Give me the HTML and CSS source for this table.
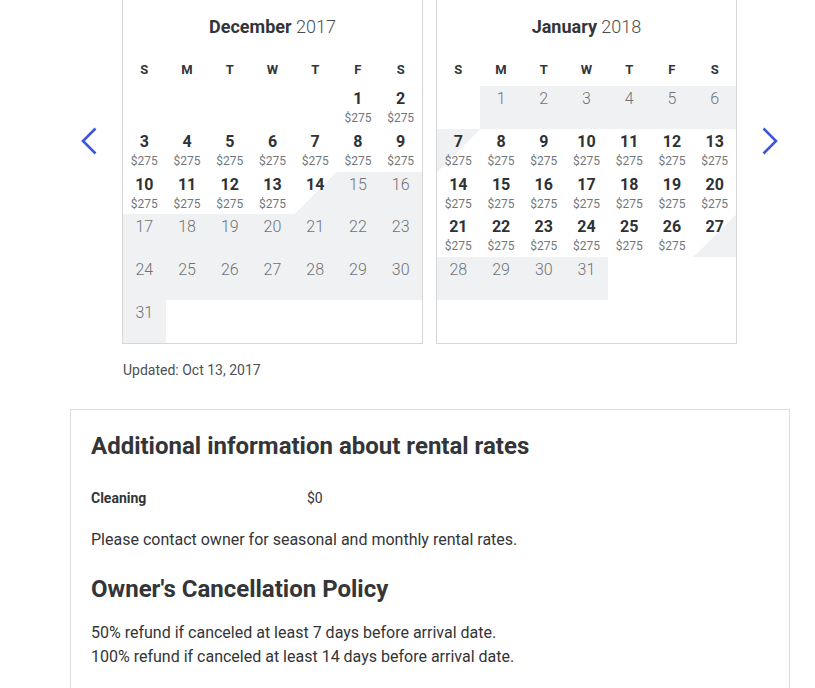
FILE: index.html
```html
<!DOCTYPE html>
<html lang="en">
<head>
    <meta charset="UTF-8">
    <meta name="viewport" content="width=device-width, initial-scale=1.0">
    <title>Rates</title>
    <link rel="stylesheet" href="styles.css">
</head>
<body>
<div class="page">
    <!-- Availability calendars -->
    <div class="cal-row">
        <button class="cal-arrow" aria-label="Previous month">
            <svg width="16" height="28" viewBox="0 0 16 28"><path d="M14.5 1.5 L2 14 L14.5 26.5" fill="none" stroke="#3f57d6" stroke-width="2.6"/></svg>
        </button>

        <div class="cal-pair">
            <div class="month">
                <div class="month-title"><b>December</b> 2017</div>
                <div class="weekdays"><span>S</span><span>M</span><span>T</span><span>W</span><span>T</span><span>F</span><span>S</span></div>
                <div class="days">
                    <div class="day blank"></div><div class="day blank"></div><div class="day blank"></div><div class="day blank"></div><div class="day blank"></div>
                    <div class="day"><b>1</b><i>$275</i></div>
                    <div class="day"><b>2</b><i>$275</i></div>
                    <div class="day"><b>3</b><i>$275</i></div>
                    <div class="day"><b>4</b><i>$275</i></div>
                    <div class="day"><b>5</b><i>$275</i></div>
                    <div class="day"><b>6</b><i>$275</i></div>
                    <div class="day"><b>7</b><i>$275</i></div>
                    <div class="day"><b>8</b><i>$275</i></div>
                    <div class="day"><b>9</b><i>$275</i></div>
                    <div class="day"><b>10</b><i>$275</i></div>
                    <div class="day"><b>11</b><i>$275</i></div>
                    <div class="day"><b>12</b><i>$275</i></div>
                    <div class="day"><b>13</b><i>$275</i></div>
                    <div class="day out"><b>14</b></div>
                    <div class="day off"><b>15</b></div>
                    <div class="day off"><b>16</b></div>
                    <div class="day off"><b>17</b></div>
                    <div class="day off"><b>18</b></div>
                    <div class="day off"><b>19</b></div>
                    <div class="day off"><b>20</b></div>
                    <div class="day off"><b>21</b></div>
                    <div class="day off"><b>22</b></div>
                    <div class="day off"><b>23</b></div>
                    <div class="day off"><b>24</b></div>
                    <div class="day off"><b>25</b></div>
                    <div class="day off"><b>26</b></div>
                    <div class="day off"><b>27</b></div>
                    <div class="day off"><b>28</b></div>
                    <div class="day off"><b>29</b></div>
                    <div class="day off"><b>30</b></div>
                    <div class="day off"><b>31</b></div>
                    <div class="day blank"></div><div class="day blank"></div><div class="day blank"></div><div class="day blank"></div><div class="day blank"></div><div class="day blank"></div>
                </div>
            </div>

            <div class="month">
                <div class="month-title"><b>January</b> 2018</div>
                <div class="weekdays"><span>S</span><span>M</span><span>T</span><span>W</span><span>T</span><span>F</span><span>S</span></div>
                <div class="days">
                    <div class="day blank"></div>
                    <div class="day off"><b>1</b></div>
                    <div class="day off"><b>2</b></div>
                    <div class="day off"><b>3</b></div>
                    <div class="day off"><b>4</b></div>
                    <div class="day off"><b>5</b></div>
                    <div class="day off"><b>6</b></div>
                    <div class="day in"><b>7</b><i>$275</i></div>
                    <div class="day"><b>8</b><i>$275</i></div>
                    <div class="day"><b>9</b><i>$275</i></div>
                    <div class="day"><b>10</b><i>$275</i></div>
                    <div class="day"><b>11</b><i>$275</i></div>
                    <div class="day"><b>12</b><i>$275</i></div>
                    <div class="day"><b>13</b><i>$275</i></div>
                    <div class="day"><b>14</b><i>$275</i></div>
                    <div class="day"><b>15</b><i>$275</i></div>
                    <div class="day"><b>16</b><i>$275</i></div>
                    <div class="day"><b>17</b><i>$275</i></div>
                    <div class="day"><b>18</b><i>$275</i></div>
                    <div class="day"><b>19</b><i>$275</i></div>
                    <div class="day"><b>20</b><i>$275</i></div>
                    <div class="day"><b>21</b><i>$275</i></div>
                    <div class="day"><b>22</b><i>$275</i></div>
                    <div class="day"><b>23</b><i>$275</i></div>
                    <div class="day"><b>24</b><i>$275</i></div>
                    <div class="day"><b>25</b><i>$275</i></div>
                    <div class="day"><b>26</b><i>$275</i></div>
                    <div class="day out"><b>27</b></div>
                    <div class="day off"><b>28</b></div>
                    <div class="day off"><b>29</b></div>
                    <div class="day off"><b>30</b></div>
                    <div class="day off"><b>31</b></div>
                    <div class="day blank"></div><div class="day blank"></div><div class="day blank"></div>
                    <div class="day blank"></div><div class="day blank"></div><div class="day blank"></div><div class="day blank"></div><div class="day blank"></div><div class="day blank"></div><div class="day blank"></div>
                </div>
            </div>
        </div>

        <button class="cal-arrow" aria-label="Next month">
            <svg width="16" height="28" viewBox="0 0 16 28"><path d="M1.5 1.5 L14 14 L1.5 26.5" fill="none" stroke="#3f57d6" stroke-width="2.6"/></svg>
        </button>
    </div>

    <p class="updated">Updated: Oct 13, 2017</p>

    <!-- Rate details -->
    <div class="info-box">
        <h2>Additional information about rental rates</h2>
        <div class="fee-row">
            <span class="fee-name">Cleaning</span>
            <span class="fee-value">$0</span>
        </div>
        <p class="note">Please contact owner for seasonal and monthly rental rates.</p>

        <h2 class="policy-title">Owner's Cancellation Policy</h2>
        <p class="policy">50% refund if canceled at least 7 days before arrival date.<br>
        100% refund if canceled at least 14 days before arrival date.</p>
    </div>
</div>
</body>
</html>
```

FILE: styles.css
```css
/* Body Style */
body {
    margin: 0;
    font-family: Roboto, 'Liberation Sans', Arial, sans-serif;
    color: #333538;
    background-color: #fff;
}

.page {
    width: 720px;
    margin-left: 70px;
}

/* Calendars */
.cal-row {
    display: flex;
    justify-content: space-between;
    align-items: flex-start;
    padding: 0 12px 0 11px;
}

.cal-arrow {
    background: none;
    border: none;
    padding: 0;
    margin-top: 127px;
    width: 16px;
    height: 28px;
    cursor: pointer;
}

.cal-arrow svg {
    display: block;
}

.cal-pair {
    display: flex;
    gap: 13px;
}

.month {
    width: 299px;
    border: 1px solid #d6d6d6;
    border-top: none;
    padding-top: 15px;
}

.month-title {
    text-align: center;
    font-size: 18px;
    line-height: 24px;
    font-weight: 300;
    color: #4a4d52;
    margin-bottom: 18px;
}

.month-title b {
    font-weight: 700;
    color: #333538;
}

.weekdays {
    display: grid;
    grid-template-columns: repeat(7, 1fr);
    text-align: center;
    font-size: 13px;
    font-weight: 700;
    line-height: 26px;
    margin-bottom: 3px;
}

.days {
    display: grid;
    grid-template-columns: repeat(7, 1fr);
    grid-auto-rows: 42.8px;
}

.day {
    text-align: center;
    padding-top: 3px;
    box-sizing: border-box;
}

.day b {
    display: block;
    font-size: 16px;
    line-height: 19px;
    font-weight: 700;
    color: #2f3235;
}

.day i {
    display: block;
    font-style: normal;
    font-size: 12px;
    line-height: 14px;
    margin-top: 3px;
    color: #73777c;
}

.day.off {
    background: #f0f1f3;
}

.day.off b {
    font-weight: 300;
    color: #6f7378;
}

.day.out {
    background: linear-gradient(to bottom right, transparent 50%, #f0f1f3 50%);
}

.day.in {
    background: linear-gradient(to bottom right, #f0f1f3 50%, transparent 50%);
}

.updated {
    margin: 17px 0 0 53px;
    font-size: 14px;
    line-height: 18px;
    color: #4d5055;
}

/* Info box */
.info-box {
    margin-top: 30px;
    border: 1px solid #dcdcdc;
    padding: 21px 20px 20px;
}

.info-box h2 {
    margin: 0;
    font-size: 24px;
    line-height: 30px;
    font-weight: 700;
    color: #333538;
}

.fee-row {
    display: flex;
    margin-top: 27px;
    font-size: 14px;
    line-height: 20px;
}

.fee-name {
    width: 216px;
    font-weight: 700;
}

.note {
    margin: 20px 0 0;
    font-size: 16px;
    line-height: 24px;
}

.info-box .policy-title {
    margin-top: 22px;
}

.policy {
    margin: 17px 0 0;
    font-size: 16px;
    line-height: 24px;
}
```
